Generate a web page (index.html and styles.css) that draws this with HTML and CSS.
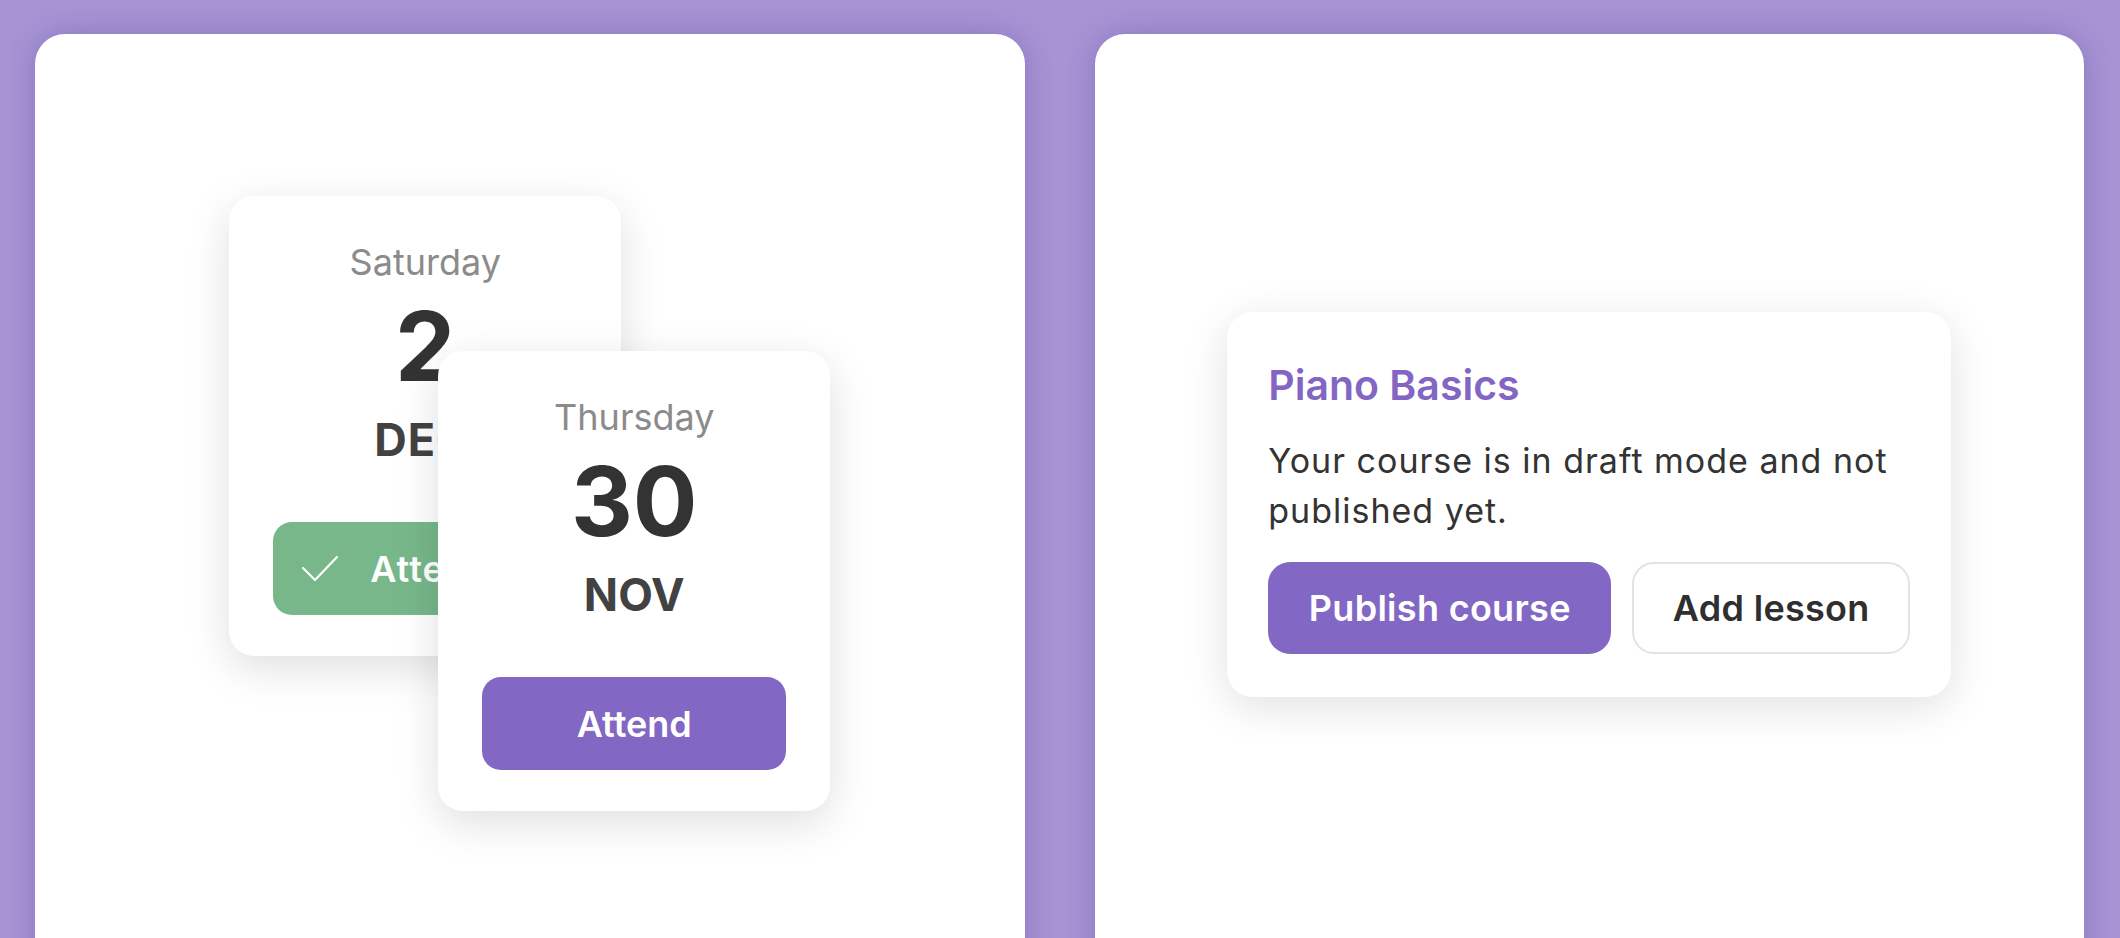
FILE: index.html
```html
<!DOCTYPE html>
<html lang="en">
<head>
<meta charset="utf-8">
<title>Cards</title>
<link rel="stylesheet" href="styles.css">
</head>
<body>
<div class="page">
  <section class="panel panel-events">
    <div class="stack">
      <div class="date-card date-card-back">
        <div class="day">Saturday</div>
        <div class="num">2</div>
        <div class="month month-wide">DEC</div>
        <button class="btn btn-green">
          <svg class="check" width="36" height="26" viewBox="0 0 36 26"><path d="M1 12 L13 24 L35 1" fill="none" stroke="#fff" stroke-width="2.2" stroke-linecap="round" stroke-linejoin="round"/></svg>
          <span>Attending</span>
        </button>
      </div>
      <div class="date-card date-card-front">
        <div class="day">Thursday</div>
        <div class="num">30</div>
        <div class="month">NOV</div>
        <button class="btn btn-purple">Attend</button>
      </div>
    </div>
  </section>
  <section class="panel panel-course">
    <div class="course-card">
      <h2 class="course-title">Piano Basics</h2>
      <p class="course-text">Your course is in draft mode and not published yet.</p>
      <div class="course-actions">
        <button class="btn btn-purple btn-publish">Publish course</button>
        <button class="btn btn-outline btn-add">Add lesson</button>
      </div>
    </div>
  </section>
</div>
</body>
</html>
```
FILE: styles.css
```css
* { box-sizing: border-box; }
html, body {
  margin: 0;
  height: 100%;
  overflow: hidden;
}
body {
  background: #a794d4;
  font-family: Inter, "Noto Sans", "Liberation Sans", sans-serif;
}
.page {
  display: flex;
  gap: 70px;
  padding: 34px 36px 0 35px;
  height: 1100px;
}
.panel {
  flex: 1 1 0;
  background: #ffffff;
  border-radius: 30px;
  box-shadow: 0 0 28px rgba(70, 40, 140, 0.28);
  display: flex;
  justify-content: center;
}
.panel-events { padding-top: 162px; }
.panel-course { padding-top: 278px; }

.stack {
  display: grid;
  align-self: flex-start;
}
.date-card {
  grid-area: 1 / 1;
  width: 392px;
  height: 460px;
  background: #fff;
  border-radius: 25px;
  padding: 45px 44px 41px;
  display: flex;
  flex-direction: column;
  align-items: center;
  text-align: center;
  box-shadow: 0 12px 44px rgba(0, 0, 0, 0.13);
}
.date-card-front {
  margin-left: 209px;
  margin-top: 155px;
}
.day {
  font-size: 36px;
  line-height: 42px;
  color: #8b8b8b;
  font-weight: 400;
}
.num {
  margin-top: 8px;
  font-size: 96px;
  line-height: 110px;
  font-weight: 700;
  color: #333333;
}
.month {
  margin-top: 14px;
  font-size: 45px;
  line-height: 50px;
  font-weight: 700;
  color: #424242;
}
.month-wide { letter-spacing: 1px; margin-right: 6px; }
.btn {
  font-family: inherit;
  border: none;
  cursor: pointer;
  display: flex;
  align-items: center;
  justify-content: center;
  font-weight: 600;
}
.date-card .btn {
  margin-top: 57px;
  width: 100%;
  height: 93px;
  border-radius: 19px;
  font-size: 36px;
  flex-shrink: 0;
}
.btn-purple {
  background: #8367c4;
  color: #fff;
}
.btn-green {
  background: #77b78a;
  color: #fff;
  gap: 32px;
}
.btn-green span { letter-spacing: 1px; }
.check { display: block; }

.course-card {
  align-self: flex-start;
  width: 724px;
  height: 385px;
  background: #fff;
  border-radius: 26px;
  padding: 49px 41px 43px;
  box-shadow: 0 10px 44px rgba(0, 0, 0, 0.12);
}
.course-title {
  margin: 0;
  font-size: 41px;
  line-height: 48px;
  font-weight: 600;
  color: #8366c3;
}
.course-text {
  margin: 27px 0 0;
  font-size: 34px;
  line-height: 50px;
  letter-spacing: 1px;
  color: #333333;
}
.course-actions {
  margin-top: 26px;
  display: flex;
  gap: 21px;
}
.btn-publish, .btn-add {
  height: 92px;
  border-radius: 22px;
  font-size: 36px;
  padding: 0;
  letter-spacing: 0.3px;
}
.btn-publish { width: 343px; }
.btn-add { width: 278px; }
.btn-outline {
  background: #fff;
  color: #2f2f2f;
  border: 2px solid #e2e2e2;
}
```
